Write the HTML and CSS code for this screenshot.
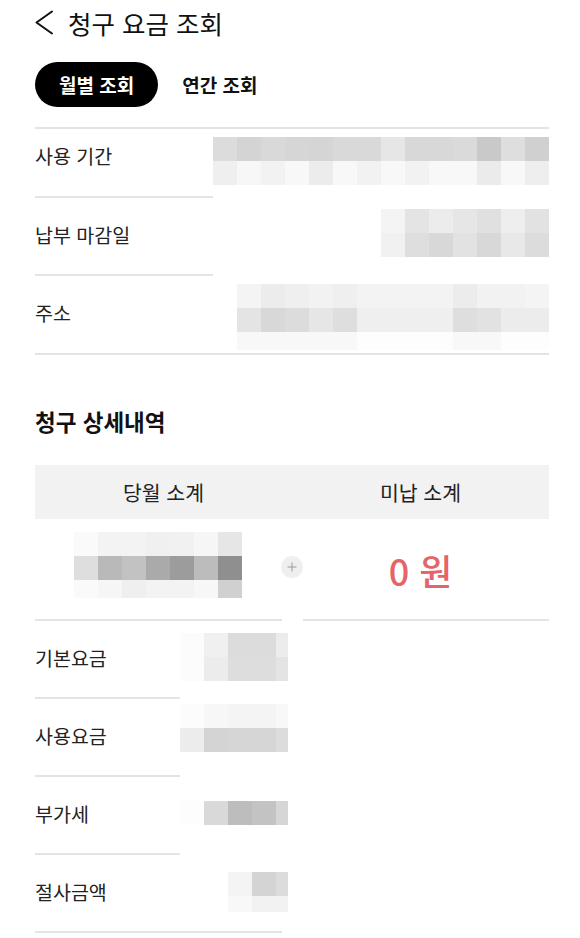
FILE: index.html
```html
<!DOCTYPE html>
<html lang="ko">
<head>
<meta charset="utf-8">
<title>청구 요금 조회</title>
<link rel="stylesheet" href="styles.css">
</head>
<body>
<div class="page">
  <header class="topbar">
    <svg class="back" width="20" height="26" viewBox="0 0 20 26" aria-hidden="true">
      <path d="M18 1.5 L2.5 12.5 L18 23.5" fill="none" stroke="#111" stroke-width="2" stroke-linecap="round" stroke-linejoin="round"/>
    </svg>
    <h1 class="title">청구 요금 조회</h1>
  </header>

  <nav class="tabs">
    <span class="tab active">월별 조회</span>
    <span class="tab">연간 조회</span>
  </nav>

  <section class="info">
    <div class="row first">
      <div class="label">사용 기간</div>
      <div class="value off8">
        <div class="mosaic m14">
          <i class="gdc"></i><i class="gd4"></i><i class="gd9"></i><i class="gd6"></i><i class="gd5"></i><i class="gd9"></i><i class="gd9"></i><i class="ge6"></i><i class="gd8"></i><i class="gd8"></i><i class="gda"></i><i class="gc9"></i><i class="gde"></i><i class="gd0"></i>
          <i class="gef"></i><i class="gf7"></i><i class="gf2"></i><i class="gf8"></i><i class="gec"></i><i class="gf8"></i><i class="gf2"></i><i class="gf8"></i><i class="gf2"></i><i class="gf8"></i><i class="gf8"></i><i class="geb"></i><i class="gf8"></i><i class="gee"></i>
        </div>
      </div>
    </div>
    <div class="row">
      <div class="label">납부 마감일</div>
      <div class="value off11">
        <div class="mosaic m7">
          <i class="gf4"></i><i class="ge4"></i><i class="gec"></i><i class="ge6"></i><i class="ge0"></i><i class="gee"></i><i class="ge2"></i>
          <i class="gf1"></i><i class="gde"></i><i class="gd8"></i><i class="ge2"></i><i class="gd8"></i><i class="ge8"></i><i class="gdc"></i>
        </div>
      </div>
    </div>
    <div class="row">
      <div class="label">주소</div>
      <div class="value off8">
        <div class="mosaic m13">
          <i class="gf4"></i><i class="gec"></i><i class="gef"></i><i class="gf2"></i><i class="gef"></i><i class="gf3"></i><i class="gf3"></i><i class="gf3"></i><i class="gf3"></i><i class="gec"></i><i class="gf2"></i><i class="gf2"></i><i class="gf4"></i>
          <i class="ge4"></i><i class="gd8"></i><i class="gdc"></i><i class="ge6"></i><i class="gde"></i><i class="gef"></i><i class="gef"></i><i class="gef"></i><i class="gef"></i><i class="gde"></i><i class="ge2"></i><i class="gec"></i><i class="gec"></i>
          <i class="gf8"></i><i class="gf8"></i><i class="gf8"></i><i class="gf8"></i><i class="gf8"></i><i class="gfd"></i><i class="gfd"></i><i class="gfd"></i><i class="gfd"></i><i class="gf8"></i><i class="gf8"></i><i class="gfd"></i><i class="gfd"></i>
        </div>
      </div>
    </div>
  </section>

  <h2 class="sec-title">청구 상세내역</h2>

  <section class="summary">
    <div class="sum-head">
      <div>당월 소계</div>
      <div>미납 소계</div>
    </div>
    <div class="sum-body">
      <div class="sum-cell left">
        <div class="mosaic m7 tall">
          <i class="gfa"></i><i class="gf3"></i><i class="gf3"></i><i class="gf0"></i><i class="gf1"></i><i class="gf6"></i><i class="ge6"></i>
          <i class="gde"></i><i class="gb9"></i><i class="gc2"></i><i class="gaa"></i><i class="g9c"></i><i class="gbc"></i><i class="g8f"></i>
          <i class="gfa"></i><i class="gf6"></i><i class="gef"></i><i class="gf3"></i><i class="gf3"></i><i class="gf7"></i><i class="gd0"></i>
        </div>
      </div>
      <div class="sum-cell right">
        <span class="amount">0 원</span>
      </div>
      <span class="plus" aria-hidden="true">
        <svg width="10" height="10" viewBox="0 0 10 10"><path d="M5 0.5 V9.5 M0.5 5 H9.5" stroke="#9a9a9a" stroke-width="1"/></svg>
      </span>
    </div>
  </section>

  <section class="charges">
    <div class="row">
      <div class="label">기본요금</div>
      <div class="value off12">
        <div class="mosaic m5">
          <i class="gfc"></i><i class="gf0"></i><i class="gdc"></i><i class="gdc"></i><i class="gec"></i>
          <i class="gfc"></i><i class="gec"></i><i class="gdd"></i><i class="gdd"></i><i class="ge4"></i>
        </div>
      </div>
    </div>
    <div class="row">
      <div class="label">사용요금</div>
      <div class="value off5">
        <div class="mosaic m5">
          <i class="gfc"></i><i class="gf7"></i><i class="gf4"></i><i class="gf4"></i><i class="gf8"></i>
          <i class="gec"></i><i class="gd4"></i><i class="gd6"></i><i class="gd6"></i><i class="gdc"></i>
        </div>
      </div>
    </div>
    <div class="row">
      <div class="label">부가세</div>
      <div class="value off24">
        <div class="mosaic m5">
          <i class="gfd"></i><i class="gd9"></i><i class="gbd"></i><i class="gc3"></i><i class="gd6"></i>
        </div>
      </div>
    </div>
    <div class="row">
      <div class="label">절사금액</div>
      <div class="value off17 shift48">
        <div class="mosaic m3 short">
          <i class="gf4"></i><i class="gd4"></i><i class="gdc"></i>
          <i class="gf8"></i><i class="gf2"></i><i class="gf2"></i>
        </div>
      </div>
    </div>
  </section>
</div>
</body>
</html>
```

FILE: styles.css
```css
* { box-sizing: border-box; }

html, body { background: #fff; }

body {
  margin: 0;
  font-family: "Noto Sans CJK KR", "Noto Sans", sans-serif;
  color: #1a1a1a;
}

.page {
  padding: 0 31px 0 35px;
}

/* top bar */
.topbar {
  display: flex;
  align-items: center;
  gap: 14px;
  height: 45px;
}

.back { display: block; margin-left: -1px; }

.title {
  margin: 0;
  font-size: 25.5px;
  font-weight: 400;
  line-height: 36px;
  color: #111;
}

/* tabs */
.tabs {
  display: flex;
  margin-top: 17px;
}

.tab {
  display: flex;
  align-items: center;
  height: 45px;
  padding: 0 24px;
  border-radius: 23px;
  font-size: 19px;
  font-weight: 700;
  color: #111;
}

.tab.active {
  background: #000;
  color: #fff;
}

/* info rows */
.info {
  margin-top: 20px;
  border-top: 2px solid #e4e4e4;
  border-bottom: 2px solid #e4e4e4;
}

.row {
  display: grid;
  grid-template-columns: 178px 1fr;
}

.label {
  padding: 23px 0 25px;
  line-height: 28px;
  font-size: 19.5px;
  color: #222;
  border-bottom: 2px solid #e4e4e4;
}

.row:last-child .label {
  border-bottom: none;
  padding-bottom: 26px;
}

.row.first .label {
  padding-top: 13px;
  padding-bottom: 26px;
}

.value {
  display: flex;
  justify-content: flex-end;
  align-items: flex-start;
}

.off5 { padding-top: 5px; }
.off8 { padding-top: 8px; }
.off11 { padding-top: 11px; }
.off12 { padding-top: 12px; }
.off17 { padding-top: 17px; }
.off24 { padding-top: 24px; }

/* pixelated (masked) values */
.mosaic {
  display: grid;
  grid-auto-rows: 24px;
}

.mosaic i { display: block; }

.m14 { grid-template-columns: repeat(14, 24px); }
.m13 { grid-template-columns: repeat(13, 24px); grid-template-rows: 24px 24px 18px; }
.m7 { grid-template-columns: repeat(7, 24px); }
.m5 { grid-template-columns: 24px 24px 24px 24px 12px; }
.m3 { grid-template-columns: 24px 24px 12px; }
.tall { grid-template-rows: 24px 24px 18px; }
.short { grid-template-rows: 24px 16px; }

.gfd { background: #fdfdfd; }
.gfc { background: #fcfcfc; }
.gfa { background: #fafafa; }
.gf8 { background: #f8f8f8; }
.gf7 { background: #f7f7f7; }
.gf6 { background: #f6f6f6; }
.gf4 { background: #f4f4f4; }
.gf3 { background: #f3f3f3; }
.gf2 { background: #f2f2f2; }
.gf1 { background: #f1f1f1; }
.gf0 { background: #f0f0f0; }
.gef { background: #efefef; }
.gee { background: #eeeeee; }
.gec { background: #ececec; }
.geb { background: #ebebeb; }
.ge8 { background: #e8e8e8; }
.ge6 { background: #e6e6e6; }
.ge4 { background: #e4e4e4; }
.ge2 { background: #e2e2e2; }
.ge0 { background: #e0e0e0; }
.gde { background: #dedede; }
.gdd { background: #dddddd; }
.gdc { background: #dcdcdc; }
.gda { background: #dadada; }
.gd9 { background: #d9d9d9; }
.gd8 { background: #d8d8d8; }
.gd6 { background: #d6d6d6; }
.gd5 { background: #d5d5d5; }
.gd4 { background: #d4d4d4; }
.gd0 { background: #d0d0d0; }
.gc9 { background: #c9c9c9; }
.gc3 { background: #c3c3c3; }
.gc2 { background: #c2c2c2; }
.gbd { background: #bdbdbd; }
.gbc { background: #bcbcbc; }
.gb9 { background: #b9b9b9; }
.gaa { background: #aaaaaa; }
.g9c { background: #9c9c9c; }
.g8f { background: #8f8f8f; }

/* details */
.sec-title {
  margin: 50px 0 28px;
  font-size: 22.5px;
  font-weight: 700;
  line-height: 32px;
  color: #111;
}

.sum-head {
  display: grid;
  grid-template-columns: 1fr 1fr;
  align-items: center;
  height: 54px;
  background: #f2f2f2;
  text-align: center;
  font-size: 20.5px;
  color: #222;
}

.sum-body {
  position: relative;
  display: grid;
  grid-template-columns: 1fr 1fr;
}

.sum-cell {
  height: 102px;
  border-bottom: 2px solid #e4e4e4;
}

.sum-cell.left {
  margin-right: 10px;
  padding: 13px 0 0 39px;
}

.sum-cell.right {
  margin-left: 11px;
  padding-right: 11px;
  display: flex;
  align-items: center;
  justify-content: center;
}

.amount {
  font-size: 36px;
  font-weight: 500;
  line-height: 44px;
  color: #e5636b;
  padding-top: 2px;
}

.plus {
  position: absolute;
  left: calc(50% - 11px);
  top: 37px;
  width: 22px;
  height: 22px;
  border-radius: 50%;
  background: #efefef;
  display: flex;
  align-items: center;
  justify-content: center;
}

.plus svg { display: block; }

/* charges list */
.charges {
  width: 247px;
  border-bottom: 2px solid #e4e4e4;
}

.charges .row {
  grid-template-columns: 145px 1fr;
}

.charges .row:last-child .label {
  padding-bottom: 25px;
}

.charges .value {
  justify-content: flex-start;
}

.shift48 { padding-left: 48px; }
```
